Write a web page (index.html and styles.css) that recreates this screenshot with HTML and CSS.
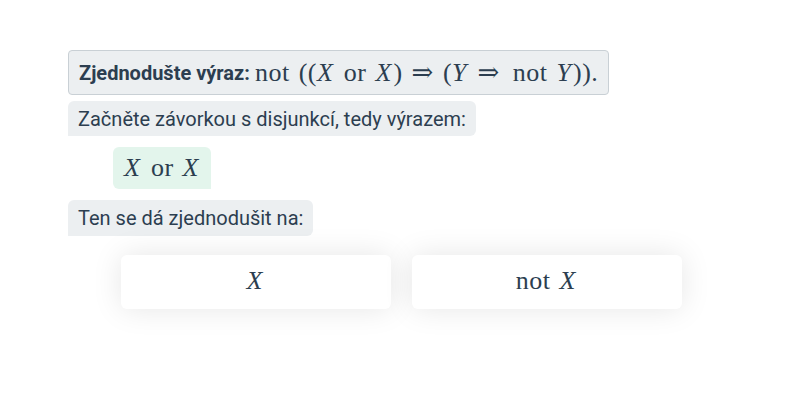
FILE: index.html
```html
<!DOCTYPE html>
<html>
<head>
<meta charset="utf-8">
<link rel="stylesheet" href="styles.css">
</head>
<body>
<div class="page">
  <div class="task"><b>Zjednodušte výraz:</b><span class="math">not<span class="sp"></span>((<i>X</i><span class="sp"></span>or<span class="sp"></span><i>X</i>)<span class="sp"></span>⇒<span class="sp"></span>(<i>Y</i><span class="sp"></span>⇒<span class="sp2"></span>not<span class="sp"></span><i>Y</i>)).</span></div>
  <div class="bubble">Začněte závorkou s disjunkcí, tedy výrazem:</div>
  <div class="answer"><span class="math"><i>X</i><span class="sp"></span>or<span class="sp"></span><i>X</i></span></div>
  <div class="bubble">Ten se dá zjednodušit na:</div>
  <div class="choices">
    <div class="card"><span class="math"><i>X</i></span></div>
    <div class="card"><span class="math">not<span class="sp"></span><i>X</i></span></div>
  </div>
</div>
</body>
</html>
```

FILE: styles.css
```css
html, body {
  margin: 0;
  background: #ffffff;
}
.page {
  min-height: 400px;
  box-sizing: border-box;
  padding: 50px 0 0 68px;
  font-family: Roboto, "Noto Sans", sans-serif;
  color: #2c3e50;
  font-size: 20px;
  display: flex;
  flex-direction: column;
  align-items: flex-start;
}
.math {
  font-family: "Liberation Serif", "DejaVu Serif", serif;
  font-size: 26px;
  letter-spacing: 0.5px;
  display: inline-flex;
  align-items: baseline;
}
.math i {
  font-style: italic;
  letter-spacing: 0;
  padding-right: 2px;
}
.sp {
  display: inline-block;
  width: 9px;
}
.sp2 {
  display: inline-block;
  width: 13px;
}
.task {
  background: #eceff1;
  border: 1px solid #c9d0d5;
  border-radius: 4px;
  box-sizing: border-box;
  height: 45px;
  padding: 0 10px;
  display: flex;
  align-items: center;
  gap: 5px;
}
.task b {
  font-weight: 700;
}
.bubble {
  background: #eceff1;
  border-radius: 6px 6px 6px 0;
  padding: 0 10px;
  height: 35px;
  display: flex;
  align-items: center;
  margin-top: 6px;
}
.answer + .bubble {
  margin-top: 11px;
  height: 36px;
}
.answer {
  margin: 11px 0 0 45px;
  background: #e3f5ec;
  border-radius: 6px 6px 0 6px;
  height: 42px;
  width: 98px;
  box-sizing: border-box;
  padding-left: 11px;
  display: flex;
  align-items: center;
}
.choices {
  align-self: stretch;
  margin-left: -68px;
  margin-top: 19px;
  display: flex;
  justify-content: center;
  gap: 21px;
  padding-left: 2px;
}
.card {
  width: 270px;
  height: 54px;
  box-sizing: border-box;
  padding-bottom: 3px;
  background: #ffffff;
  border-radius: 6px;
  box-shadow: 0 0 30px rgba(0, 0, 0, 0.1);
  display: flex;
  align-items: center;
  justify-content: center;
}
```
